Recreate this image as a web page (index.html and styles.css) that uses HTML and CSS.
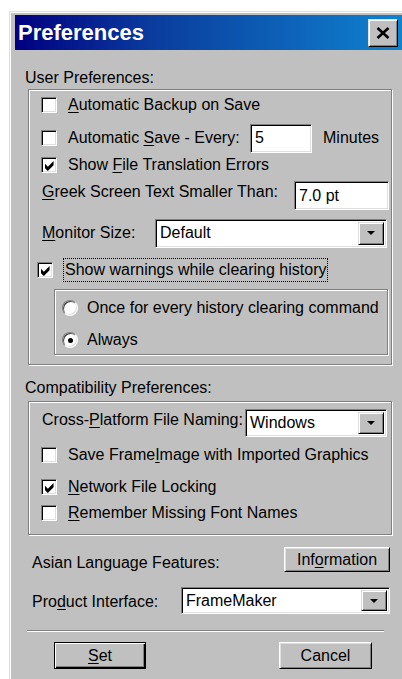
FILE: index.html
```html
<!DOCTYPE html>
<html>
<head>
<meta charset="utf-8">
<title>Preferences</title>
<link rel="stylesheet" href="styles.css">
</head>
<body>
<div class="window">
  <div class="titlebar">
    <span class="title">Preferences</span>
    <span class="close">
      <svg width="14" height="12" viewBox="0 0 14 12"><path d="M1.5 1 L12.5 11 M12.5 1 L1.5 11" stroke="#000" stroke-width="2.6" fill="none"/></svg>
    </span>
  </div>

  <div class="client">
    <div class="section-label">User Preferences:</div>
    <div class="group group-user">
      <div class="row r-backup">
        <span class="cb"></span>
        <span class="cb-text"><u>A</u>utomatic Backup on Save</span>
      </div>
      <div class="row r-autosave">
        <span class="cb"></span>
        <span class="cb-text autosave-label">Automatic <u>S</u>ave - Every:</span>
        <span class="field field-minutes">5</span>
        <span class="unit">Minutes</span>
      </div>
      <div class="row r-errors">
        <span class="cb checked"><svg class="tick" viewBox="0 0 7 7"><path d="M0 2 L2 4 L6 0 V3 L2 7 L0 5 Z" fill="#000"/></svg></span>
        <span class="cb-text">Show <u>F</u>ile Translation Errors</span>
      </div>
      <div class="row r-greek">
        <span class="field-label greek-label"><u>G</u>reek Screen Text Smaller Than:</span>
        <span class="field field-greek">7.0 pt</span>
      </div>
      <div class="row r-monitor">
        <span class="field-label monitor-label"><u>M</u>onitor Size:</span>
        <span class="select select-monitor">
          <span class="value">Default</span>
          <span class="arrow"><svg width="8" height="4" viewBox="0 0 8 4"><path d="M0 0 H8 L4 4 Z" fill="#000"/></svg></span>
        </span>
      </div>
      <div class="row r-warnings">
        <span class="cb checked cb-warn"><svg class="tick" viewBox="0 0 7 7"><path d="M0 2 L2 4 L6 0 V3 L2 7 L0 5 Z" fill="#000"/></svg></span>
        <span class="focus">Show warnings while clearing history</span>
      </div>
      <div class="group inner">
        <div class="row r-once">
          <span class="radio"></span>
          <span class="radio-text">Once for every history clearing command</span>
        </div>
        <div class="row r-always">
          <span class="radio on"><span class="dot"></span></span>
          <span class="radio-text">Always</span>
        </div>
      </div>
    </div>

    <div class="section-label compat-label">Compatibility Preferences:</div>
    <div class="group group-compat">
      <div class="row r-naming">
        <span class="field-label naming-label">Cross-<u>P</u>latform File Naming:</span>
        <span class="select select-naming">
          <span class="value">Windows</span>
          <span class="arrow"><svg width="8" height="4" viewBox="0 0 8 4"><path d="M0 0 H8 L4 4 Z" fill="#000"/></svg></span>
        </span>
      </div>
      <div class="row r-frameimage">
        <span class="cb"></span>
        <span class="cb-text">Save Frame<u>I</u>mage with Imported Graphics</span>
      </div>
      <div class="row r-locking">
        <span class="cb checked"><svg class="tick" viewBox="0 0 7 7"><path d="M0 2 L2 4 L6 0 V3 L2 7 L0 5 Z" fill="#000"/></svg></span>
        <span class="cb-text"><u>N</u>etwork File Locking</span>
      </div>
      <div class="row r-fonts">
        <span class="cb"></span>
        <span class="cb-text"><u>R</u>emember Missing Font Names</span>
      </div>
    </div>

    <div class="line r-asian">
      <span class="line-label">Asian Language Features:</span>
      <span class="button btn-info">Inf<u>o</u>rmation</span>
    </div>
    <div class="line r-product">
      <span class="line-label product-label">Pro<u>d</u>uct Interface:</span>
      <span class="select select-product">
        <span class="value">FrameMaker</span>
        <span class="arrow"><svg width="8" height="4" viewBox="0 0 8 4"><path d="M0 0 H8 L4 4 Z" fill="#000"/></svg></span>
      </span>
    </div>

    <div class="separator"></div>

    <div class="actions">
      <span class="button btn-default"><u>S</u>et</span>
      <span class="button btn-cancel">Cancel</span>
    </div>
  </div>
</div>
</body>
</html>
```
FILE: styles.css
```css
* { box-sizing: border-box; }

html, body {
  margin: 0;
  height: 679px;
  overflow: hidden;
  background: #fff;
}

body {
  font-family: "Liberation Sans", Arial, sans-serif;
  font-size: 16px;
  color: #000;
}

u { text-decoration-thickness: 1px; text-underline-offset: 2px; }

/* window frame */
.window {
  margin: 11px 0 0 9px;
  width: 420px;
  height: 700px;
  background: #c0c0c0;
  border-top: 1px solid #dfdfdf;
  border-left: 1px solid #dfdfdf;
  padding: 3px 0 0 5px;
  box-shadow: inset 1px 1px 0 #fff;
}

.titlebar {
  width: 392px;
  height: 35px;
  display: flex;
  align-items: flex-start;
  justify-content: space-between;
  padding: 0 9px 0 3px;
  background: linear-gradient(90deg, #000080 0%, #0a3c9e 35%, #1084d0 100%);
}

.title {
  color: #fff;
  font-weight: bold;
  font-size: 22px;
  line-height: 35px;
}

.close {
  margin-top: 4px;
  width: 30px;
  height: 28px;
  display: flex;
  align-items: center;
  justify-content: center;
  background: #c0c0c0;
  border: 1px solid;
  border-color: #dfdfdf #000 #000 #dfdfdf;
  box-shadow: inset 1px 1px 0 #fff, inset -1px -1px 0 #808080;
}

.client { width: 387px; }

.section-label {
  margin: 19px 0 0 10px;
  line-height: 18px;
}

.compat-label { margin-top: 14px; }

/* etched group boxes */
.group {
  border: 1px solid #808080;
  box-shadow: inset 1px 1px 0 #fff, 1px 1px 0 #fff;
}

.group-user {
  margin: 2px 0 0 13px;
  width: 364px;
  padding: 0 0 9px 12px;
}

.group-compat {
  margin: 4px 0 0 13px;
  width: 364px;
  padding: 0 0 10px 12px;
}

.inner {
  margin: 5px 0 0 13px;
  width: 334px;
  padding-left: 7px;
}

.row {
  display: flex;
  align-items: center;
  white-space: nowrap;
}

.r-backup { height: 30px; }
.r-autosave { height: 36px; }
.r-errors { height: 18px; }
.r-greek { height: 36px; }
.r-monitor { height: 46px; }
.r-warnings { height: 28px; }
.r-once { height: 36px; }
.r-always { height: 28px; }
.r-naming { height: 36px; }
.r-frameimage { height: 34px; }
.r-locking { height: 30px; }
.r-fonts { height: 22px; }

/* checkboxes */
.cb {
  flex: none;
  width: 16px;
  height: 16px;
  background: #fff;
  border: 1px solid;
  border-color: #808080 #fff #fff #808080;
  box-shadow: inset 1px 1px 0 #000, inset -1px -1px 0 #dfdfdf;
  display: flex;
  align-items: center;
  justify-content: center;
  padding: 1px 0 0 1px;
}

.tick { width: 10px; height: 10px; }

.cb-text { margin-left: 11px; line-height: 18px; }
.cb-warn { margin-left: -4px; }

.focus {
  margin-left: 10px;
  border: 1px dotted #000;
  padding: 2px 1px;
  line-height: 18px;
}

/* radio buttons */
.radio {
  flex: none;
  width: 16px;
  height: 16px;
  border-radius: 50%;
  background: #fff;
  border: 1px solid;
  border-color: #808080 #fff #fff #808080;
  box-shadow: inset 1px 1px 0 #404040, inset -1px -1px 0 #dfdfdf;
  display: flex;
  align-items: center;
  justify-content: center;
}

.radio .dot {
  width: 5px;
  height: 5px;
  border-radius: 50%;
  background: #000;
}

.radio-text { margin-left: 9px; }

/* labels in front of fields */
.field-label { margin-left: 1px; flex: none; }
.greek-label { width: 252px; }
.monitor-label { width: 113px; }
.naming-label { width: 203px; }
.autosave-label { width: 182px; flex: none; }

/* sunken edit fields */
.field, .select {
  background: #fff;
  border: 1px solid;
  border-color: #808080 #fff #fff #808080;
  box-shadow: inset 1px 1px 0 #000, inset -1px -1px 0 #dfdfdf;
}

.field {
  display: flex;
  align-items: center;
  padding-left: 4px;
  height: 29px;
}

.field-minutes { width: 62px; }
.unit { margin-left: 11px; }
.field-greek { width: 95px; align-self: flex-start; margin-top: 7px; }

.select {
  display: flex;
  align-items: stretch;
  padding: 2px;
}

.select .value {
  flex: 1;
  display: flex;
  align-items: center;
  padding-left: 2px;
}

.select .arrow {
  flex: none;
  width: 26px;
  display: flex;
  align-items: center;
  justify-content: center;
  background: #c0c0c0;
  border: 1px solid;
  border-color: #dfdfdf #000 #000 #dfdfdf;
  box-shadow: inset 1px 1px 0 #fff, inset -1px -1px 0 #808080;
}

.select-monitor { width: 232px; height: 29px; }
.select-naming { width: 142px; height: 28px; align-self: flex-start; margin-top: 7px; }
.select-product { width: 210px; height: 27px; }

/* loose rows under the groups */
.line {
  display: flex;
  align-items: flex-start;
  margin-left: 17px;
  width: 358px;
  white-space: nowrap;
}

.line-label { margin-top: 6px; line-height: 18px; }

.r-asian { margin-top: 13px; justify-content: space-between; }
.r-product { margin-top: 15px; }
.product-label { width: 149px; flex: none; }

/* push buttons */
.button {
  display: flex;
  align-items: center;
  justify-content: center;
  background: #c0c0c0;
  border: 1px solid;
  border-color: #fff #000 #000 #fff;
  box-shadow: inset 1px 1px 0 #dfdfdf, inset -1px -1px 0 #808080;
}

.btn-info { width: 106px; height: 25px; margin-top: -1px; }

.separator {
  margin: 16px 0 0 12px;
  width: 357px;
  height: 2px;
  border-top: 1px solid #808080;
  border-bottom: 1px solid #fff;
}

.actions {
  display: flex;
  margin: 10px 0 0 39px;
}

.btn-default {
  width: 92px;
  height: 27px;
  border-color: #000;
  box-shadow: inset 1px 1px 0 #fff, inset -1px -1px 0 #000, inset -2px -2px 0 #808080;
}

.btn-cancel {
  margin-left: 133px;
  width: 93px;
  height: 27px;
}
```
